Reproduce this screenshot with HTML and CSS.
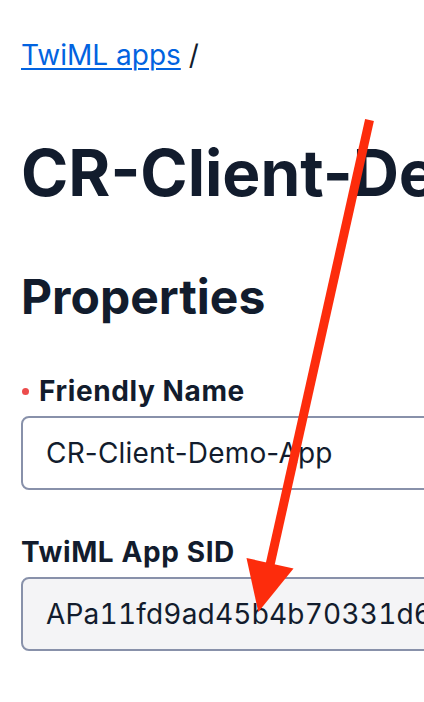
FILE: index.html
```html
<!DOCTYPE html>
<html lang="en">
<head>
<meta charset="utf-8">
<title>TwiML App</title>
<link rel="stylesheet" href="styles.css">
</head>
<body>
<div class="page">
  <nav class="breadcrumb"><a href="#" class="crumb-link">TwiML apps</a> <span class="crumb-sep">/</span></nav>
  <h1 class="title">CR-Client-Demo-App</h1>
  <h2 class="section-title">Properties</h2>
  <div class="field">
    <label class="label"><span class="required-dot"></span>Friendly Name</label>
    <div class="input">CR-Client-Demo-App</div>
  </div>
  <div class="field">
    <label class="label">TwiML App SID</label>
    <div class="input input-disabled">APa11fd9ad45b4b70331d6e0a3e2f8c7b1</div>
  </div>
</div>
<svg class="annotation" width="424" height="702" viewBox="0 0 424 702" aria-hidden="true">
  <line x1="369.5" y1="120" x2="270" y2="565" stroke="#fd2c0c" stroke-width="9"/>
  <polygon points="246.5,558 293.5,568.5 258.3,612" fill="#fd2c0c"/>
</svg>
</body>
</html>
```

FILE: styles.css
```css
html, body {
  margin: 0;
  padding: 0;
  overflow: hidden;
  background: #ffffff;
}
body {
  width: 424px;
  height: 702px;
  position: relative;
  font-family: Inter, "Noto Sans", "Liberation Sans", sans-serif;
  color: #121c2d;
}
.page {
  width: 1000px;
  padding: 35px 0 0 21px;
  box-sizing: border-box;
}
.breadcrumb {
  font-size: 28px;
  line-height: 40px;
  font-weight: 400;
  margin: 0;
}
.crumb-link {
  color: #0263e0;
  text-decoration: underline;
  text-decoration-thickness: 2px;
  text-underline-offset: 3px;
}
.crumb-sep {
  color: #121c2d;
}
.title {
  margin: 58px 0 0;
  font-size: 64px;
  line-height: 80px;
  font-weight: 700;
  white-space: nowrap;
  letter-spacing: 0;
}
.section-title {
  margin: 52px 0 0;
  font-size: 48px;
  line-height: 64px;
  font-weight: 700;
}
.field {
  margin-top: 40px;
  width: 900px;
}
.label {
  display: flex;
  align-items: center;
  font-size: 28px;
  line-height: 40px;
  font-weight: 700;
  letter-spacing: 0.6px;
  padding-top: 2px;
  margin-bottom: 5px;
}
.required-dot {
  width: 7px;
  height: 7px;
  border-radius: 50%;
  background: #ec4c4c;
  margin: 0 10px 0 1px;
}
.input {
  border: 2px solid #8891aa;
  border-radius: 8px;
  padding: 15px 23px;
  font-size: 28px;
  line-height: 40px;
  background: #ffffff;
  white-space: nowrap;
  letter-spacing: 0.2px;
}
.input-disabled {
  background: #f4f4f6;
  font-variant-numeric: tabular-nums;
}
.annotation {
  position: absolute;
  left: 0;
  top: 0;
  pointer-events: none;
}
```
